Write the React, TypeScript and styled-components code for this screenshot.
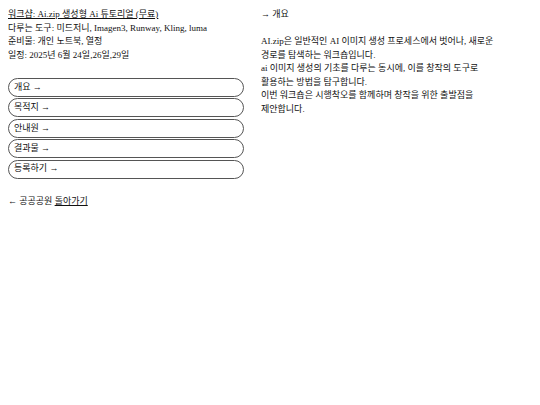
import styled, { createGlobalStyle } from 'styled-components';

const GlobalStyle = createGlobalStyle`
  body {
    margin: 8px;
    font-family: 'Liberation Serif', 'Noto Sans CJK KR', serif;
    font-size: 9px;
    line-height: 13.5px;
    color: #111;
    background: #fff;
  }
`;

const Page = styled.div`
  display: grid;
  grid-template-columns: 253px 1fr;
  column-gap: 0;
`;

const Left = styled.section`
  display: flex;
  flex-direction: column;
`;

const Info = styled.div`
  display: flex;
  flex-direction: column;
`;

const Title = styled.span`
  text-decoration: underline;
`;

const Menu = styled.nav`
  display: flex;
  flex-direction: column;
  gap: 1.4px;
  margin-top: 16px;
  width: 236px;
`;

const MenuButton = styled.div`
  display: flex;
  align-items: center;
  height: 17px;
  padding: 0 5px;
  border: 1px solid #555;
  border-radius: 10px;
`;

const Back = styled.div`
  margin-top: 16px;
`;

const BackLink = styled.span`
  text-decoration: underline;
`;

const Right = styled.section`
  display: flex;
  flex-direction: column;
`;

const Heading = styled.div`
  margin-bottom: 13.5px;
`;

const menuItems = ['개요', '목적지', '안내원', '결과물', '등록하기'];

const App = () => {
  return (
    <>
      <GlobalStyle />
      <Page>
        <Left>
          <Info>
            <div>
              <Title>워크샵: Ai.zip 생성형 Ai 튜토리얼 (무료)</Title>
            </div>
            <div>다루는 도구: 미드저니, Imagen3, Runway, Kling, luma</div>
            <div>준비물: 개인 노트북, 열정</div>
            <div>일정: 2025년 6월 24일,26일,29일</div>
          </Info>
          <Menu>
            {menuItems.map((item) => (
              <MenuButton key={item}>{item} →</MenuButton>
            ))}
          </Menu>
          <Back>
            ← 공공공원 <BackLink>돌아가기</BackLink>
          </Back>
        </Left>
        <Right>
          <Heading>→ 개요</Heading>
          <div>
            AI.zip은 일반적인 AI 이미지 생성 프로세스에서 벗어나, 새로운
            <br />
            경로를 탐색하는 워크숍입니다.
            <br />
            ai 이미지 생성의 기초를 다루는 동시에, 이를 창작의 도구로
            <br />
            활용하는 방법을 탐구합니다.
            <br />
            이번 워크숍은 시행착오를 함께하며 창작을 위한 출발점을
            <br />
            제안합니다.
          </div>
        </Right>
      </Page>
    </>
  );
};

export default App;
